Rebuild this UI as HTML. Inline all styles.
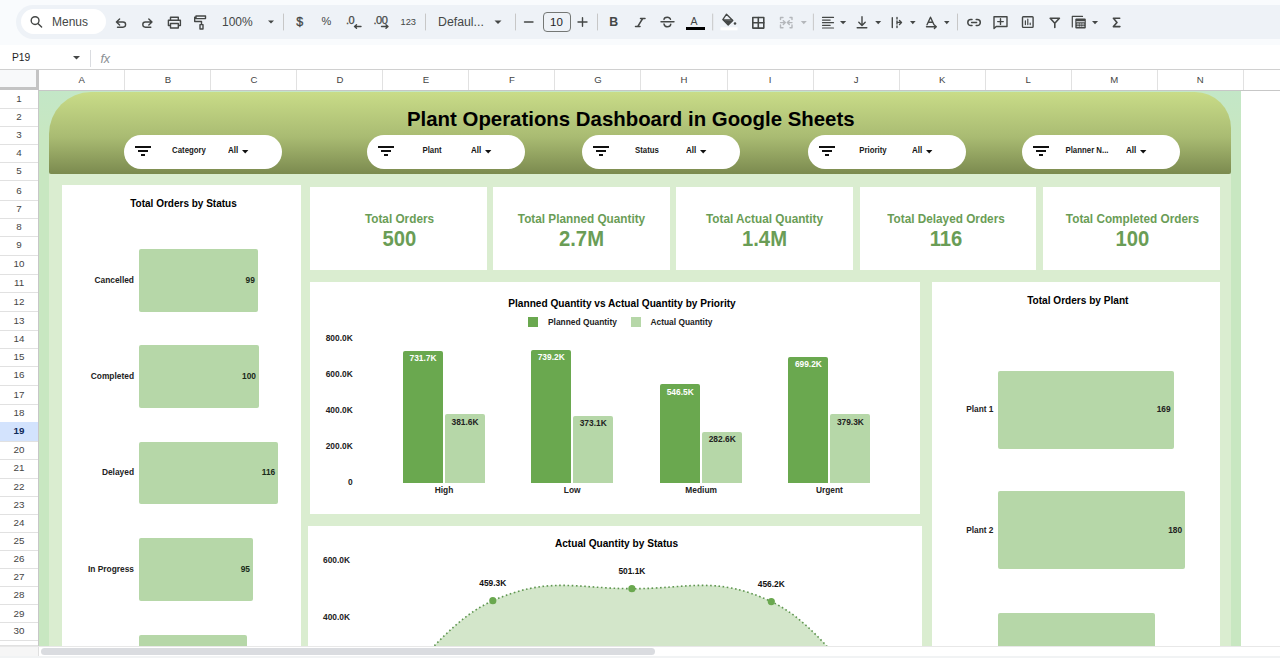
<!DOCTYPE html><html><head><meta charset="utf-8"><style>
*{margin:0;padding:0;box-sizing:border-box}
html,body{width:1280px;height:658px;overflow:hidden;background:#fff;font-family:"Liberation Sans",sans-serif;position:relative}
.a{position:absolute}
.tt{position:absolute;color:#444746;white-space:nowrap;line-height:1}
.dv{position:absolute;width:1px;height:20px;background:#c7c7c7;top:12px}
.ch{position:absolute;top:70px;height:20px;border-right:1px solid #e1e1e1;font-size:9.6px;color:#444;text-align:center;line-height:19.6px}
.rh{position:absolute;left:0;width:38px;border-bottom:1px solid #e1e1e1;font-size:9.8px;color:#444;text-align:center}
.lbl{position:absolute;font-weight:bold;color:#222;white-space:nowrap;line-height:1}
svg{position:absolute;overflow:visible}
</style></head><body>
<div class="a" style="left:0;top:0;width:1280px;height:45px;background:#f9fbfd"></div>
<div class="a" style="left:16px;top:5px;width:1280px;height:33.5px;background:#eef2f7;border-radius:17px"></div>
<div class="a" style="left:21px;top:9px;width:85px;height:25px;background:#fff;border-radius:13px"></div>
<div class="tt" style="left:52px;top:15.5px;font-size:12px">Menus</div>
<div class="tt" style="left:222px;top:16px;font-size:12px">100%</div>
<div class="tt" style="left:296.3px;top:15.5px;font-size:12.5px;-webkit-text-stroke:0.3px #444746">$</div>
<div class="tt" style="left:321.5px;top:16.3px;font-size:11px">%</div>
<div class="tt" style="left:346px;top:15.3px;font-size:11px;-webkit-text-stroke:0.25px #444746;letter-spacing:-0.5px">.0</div>
<div class="tt" style="left:373.5px;top:15.3px;font-size:11px;-webkit-text-stroke:0.25px #444746;letter-spacing:-0.5px">.00</div>
<div class="tt" style="left:400.5px;top:17.5px;font-size:9.3px">123</div>
<div class="tt" style="left:438px;top:15.5px;font-size:12.3px">Defaul...</div>
<div class="a" style="left:542.5px;top:12px;width:28px;height:20px;border:1px solid #747775;border-radius:4px"></div>
<div class="tt" style="left:542.5px;width:28px;text-align:center;top:16.5px;font-size:11.5px;color:#1f1f1f">10</div>
<div class="tt" style="left:609.3px;top:16.2px;font-size:12.3px;font-weight:bold">B</div>
<div class="tt" style="left:690.5px;top:16px;font-size:10.5px">A</div>
<svg style="left:0;top:0" width="1280" height="45" fill="none" stroke="#444746" stroke-width="1.4" stroke-linecap="round" stroke-linejoin="round"><circle cx="35.1" cy="20.6" r="3.9"/><path d="M37.9 23.4L41.6 27.1"/><path d="M116.4 22H123A2.6 2.6 0 0 1 123 27.2H117.5M119.6 18.9L116.4 22L119.6 25.1"/><path d="M152 22H145.4A2.6 2.6 0 0 0 145.4 27.2H150.8M148.8 18.9L152 22L148.8 25.1"/><path d="M170.5 19.6V17.2H178.3V19.6M170.5 25.5H168.4V20.2H180.4V25.5H178.3M170.5 23.5H178.3V28H170.5Z"/><path d="M196 16H205.5V18.6H196ZM196 17.3H194.7V21.5H201.5V24.6M200 24.6H203V29H200Z"/><path d="M268 20.5L271 23.5L274 20.5Z" fill="#444746" stroke="none"/><path d="M283.5 14V30M425.5 14V30M515.5 14V30M597.5 14V30M712.7 14V30M813.4 14V30M957.5 14V30" stroke="#c7c7c7" stroke-width="1"/><path d="M494.5 20.5L498 24L501.5 20.5Z" fill="#444746" stroke="none"/><path d="M354.5 26.5H361M354.5 26.5L356.5 24.7M354.5 26.5L356.5 28.3"/><path d="M381.5 26.5H388M388 26.5L386 24.7M388 26.5L386 28.3"/><path d="M524.5 22H533M578 22H587M582.5 17.7V26.3"/><path d="M640.5 18.5H645M635.5 26.4H640M642.7 18.5L637.8 26.4" stroke-width="1.5"/><path d="M661 21.8H674M670.5 19.4C670 17.6 668.5 17.2 667.3 17.2C665.3 17.2 664 18.3 664 19.6M664 24C664.4 26 666 26.8 667.4 26.8C669.3 26.8 670.6 25.8 670.8 24.2"/><rect x="686" y="27" width="19" height="3" fill="#000" stroke="none"/><path d="M726.5 14.2L732.8 20.5L728.2 25L722.8 19.6Z M723 19.8H732.5" stroke-width="1.3"/><path d="M723.3 20L728.2 24.8L732.5 20.5Z" fill="#444746" stroke="none"/><circle cx="735" cy="23.5" r="1.3" fill="#444746" stroke="none"/><rect x="720.5" y="27.3" width="17" height="3" fill="#fff" stroke="none"/><rect x="752.8" y="17.5" width="11" height="10.6" stroke-width="1.6"/><path d="M758.3 17.5V28.1M752.8 22.8H763.8" stroke-width="1.6"/><path d="M780.5 19.5V17.5H783M790 17.5H792V19.5M780.5 25V27.8H783M790 27.8H792V25M780.5 22.6H785M783.3 20.7L785.3 22.6L783.3 24.5M792 22.6H787.5M789.3 20.7L787.3 22.6L789.3 24.5" stroke="#b4b7bb"/><path d="M800.8 21L803.8 24.2L806.8 21Z" fill="#b4b7bb" stroke="none"/><path d="M822.5 17.4H833.5M822.5 20.1H830.2M822.5 22.7H833.5M822.5 25.3H830.2M822.5 28H833.5" stroke-width="1.2"/><path d="M840 21L843.1 24.2L846.2 21Z" fill="#444746" stroke="none"/><path d="M862 16.8V25.2M858.8 22.3L862 25.5L865.2 22.3M857.2 27.7H866.8"/><path d="M875.2 21L878.2 24.2L881.2 21Z" fill="#444746" stroke="none"/><path d="M892.3 17.7V27.5M897 17.5V19M897 21V24M897 26V27.5M897.5 22.4H901.5M899.5 20.4L901.5 22.4L899.5 24.4"/><path d="M910 21L912.8 24.2L915.6 21Z" fill="#444746" stroke="none"/><path d="M927 24.8L930.5 17.2L934 24.8M928.2 22.2H932.8M926.5 26.8H936.3M934.4 25.1L936.3 26.8L934.4 28.5"/><path d="M944 21L946.8 24.2L949.5 21Z" fill="#444746" stroke="none"/><path d="M972 19.6H970.8A3 3 0 0 0 970.8 25.6H972M976.2 19.6H977.3A3 3 0 0 1 977.3 25.6H976.2M971.6 22.6H976.6" stroke-width="1.5"/><path d="M994 16.8H1007V26.5H996.2L994 28.6Z M1000.5 18.8V24.4M997.7 21.6H1003.3" stroke-width="1.4"/><rect x="1022.5" y="16.8" width="10.6" height="10.6" rx="0.8" stroke-width="1.4"/><path d="M1025.4 20.8V24.6M1027.8 19V24.6M1030.2 23V24.6" stroke-width="1.2"/><path d="M1050.2 18.3H1059.4L1054.8 23.2ZM1054.8 23V27.4" stroke-width="1.6"/><path d="M1072.3 27V16.4H1082.5" stroke-width="1.2"/><rect x="1075.3" y="18.6" width="10.5" height="10" rx="1" fill="#444746" stroke="none"/><path d="M1076.8 21.8H1084.3M1077.2 24H1078.6M1080 24H1081.2M1082.5 24H1083.9M1077.2 26.2H1078.6M1080 26.2H1081.2M1082.5 26.2H1083.9" stroke="#eef2f7" stroke-width="1.1"/><path d="M1092 21L1095 24.2L1098.1 21Z" fill="#444746" stroke="none"/><path d="M1119.7 18.2H1113.4L1117 22.4L1113.4 26.6H1119.9" stroke-width="1.6"/></svg>
<div class="a" style="left:0;top:45px;width:1280px;height:25px;background:#fff;border-bottom:1px solid #d0d0d0"></div>
<div class="tt" style="left:12px;top:52.5px;font-size:10.3px;color:#1f1f1f">P19</div>
<svg style="left:73px;top:56px" width="7" height="4"><path d="M0 0H7L3.5 3.6Z" fill="#444746"/></svg>
<div class="a" style="left:90px;top:50px;width:1px;height:17px;background:#dadce0"></div>
<div class="tt" style="left:100.5px;top:52.5px;font-size:12.5px;font-style:italic;color:#8a8f94;letter-spacing:-0.3px">fx</div>
<div class="a" style="left:0;top:70px;width:1280px;height:21px;background:#fff;border-bottom:1px solid #c7c7c7"></div>
<div class="ch" style="left:39.30px;width:86.03px">A</div>
<div class="ch" style="left:125.33px;width:86.03px">B</div>
<div class="ch" style="left:211.36px;width:86.03px">C</div>
<div class="ch" style="left:297.39px;width:86.03px">D</div>
<div class="ch" style="left:383.42px;width:86.03px">E</div>
<div class="ch" style="left:469.45px;width:86.03px">F</div>
<div class="ch" style="left:555.48px;width:86.03px">G</div>
<div class="ch" style="left:641.51px;width:86.03px">H</div>
<div class="ch" style="left:727.54px;width:86.03px">I</div>
<div class="ch" style="left:813.57px;width:86.03px">J</div>
<div class="ch" style="left:899.60px;width:86.03px">K</div>
<div class="ch" style="left:985.63px;width:86.03px">L</div>
<div class="ch" style="left:1071.66px;width:86.03px">M</div>
<div class="ch" style="left:1157.69px;width:86.03px">N</div>
<div class="a" style="left:0;top:70px;width:39px;height:21px;background:#f8f9fa;border-right:3px solid #c4c4c4;border-bottom:4px solid #c4c4c4"></div>
<div class="a" style="left:0;top:90px;width:39px;height:556px;background:#fff;border-right:1px solid #c7c7c7"></div>
<div class="rh" style="top:90.0px;height:18.8px;line-height:18.2px;">1</div>
<div class="rh" style="top:108.2px;height:18.6px;line-height:18.0px;">2</div>
<div class="rh" style="top:126.2px;height:18.7px;line-height:18.1px;">3</div>
<div class="rh" style="top:144.3px;height:18.6px;line-height:18.0px;">4</div>
<div class="rh" style="top:162.3px;height:19.2px;line-height:18.6px;">5</div>
<div class="rh" style="top:180.9px;height:20.1px;line-height:19.5px;">6</div>
<div class="rh" style="top:200.4px;height:18.6px;line-height:18.0px;">7</div>
<div class="rh" style="top:218.4px;height:18.6px;line-height:18.0px;">8</div>
<div class="rh" style="top:236.4px;height:19.4px;line-height:18.8px;">9</div>
<div class="rh" style="top:255.2px;height:19.5px;line-height:18.9px;">10</div>
<div class="rh" style="top:274.1px;height:19.0px;line-height:18.4px;">11</div>
<div class="rh" style="top:292.5px;height:19.4px;line-height:18.8px;">12</div>
<div class="rh" style="top:311.3px;height:19.6px;line-height:19.0px;">13</div>
<div class="rh" style="top:330.3px;height:18.4px;line-height:17.8px;">14</div>
<div class="rh" style="top:348.1px;height:18.9px;line-height:18.3px;">15</div>
<div class="rh" style="top:366.4px;height:19.3px;line-height:18.7px;">16</div>
<div class="rh" style="top:385.1px;height:19.7px;line-height:19.1px;">17</div>
<div class="rh" style="top:404.2px;height:18.6px;line-height:18.0px;">18</div>
<div class="rh" style="top:422.2px;height:19.4px;line-height:18.8px;background:#d3e3fd;font-weight:bold;color:#0e2a5a;">19</div>
<div class="rh" style="top:441.0px;height:18.9px;line-height:18.3px;">20</div>
<div class="rh" style="top:459.3px;height:19.3px;line-height:18.7px;">21</div>
<div class="rh" style="top:478.0px;height:18.7px;line-height:18.1px;">22</div>
<div class="rh" style="top:496.1px;height:18.9px;line-height:18.3px;">23</div>
<div class="rh" style="top:514.4px;height:18.6px;line-height:18.0px;">24</div>
<div class="rh" style="top:532.4px;height:18.5px;line-height:17.9px;">25</div>
<div class="rh" style="top:550.3px;height:18.6px;line-height:18.0px;">26</div>
<div class="rh" style="top:568.3px;height:18.6px;line-height:18.0px;">27</div>
<div class="rh" style="top:586.3px;height:19.0px;line-height:18.4px;">28</div>
<div class="rh" style="top:604.7px;height:18.3px;line-height:17.7px;">29</div>
<div class="rh" style="top:622.4px;height:19.1px;line-height:18.5px;">30</div>
<div class="a" style="left:0;top:641px;width:38px;height:5px;background:#fff;border-bottom:1px solid #e1e1e1"></div>
<div class="a" style="left:39px;top:91px;width:1202px;height:555px;background:#c8e7c1"></div>
<div class="a" style="left:39px;top:91px;width:1202px;height:45px;background:linear-gradient(#c3e7c7,#c8e7c1)"></div>
<div class="a" style="left:49px;top:174px;width:1182px;height:472px;background:#daedd0"></div>
<div class="a" style="left:49px;top:92px;width:1182px;height:82px;border-radius:42px 36px 2px 2px;background:linear-gradient(#c9dc88,#a9bb72 55%,#7b8a4f)"></div>
<div class="lbl" style="left:407px;top:109.3px;font-size:20.4px;color:#000">Plant Operations Dashboard in Google Sheets</div>
<div class="a" style="left:124px;top:135px;width:158px;height:34px;border-radius:17px;background:#fff"></div>
<div class="lbl" style="left:124px;width:130px;text-align:center;top:146.3px;font-size:8.8px;color:#1a1a1a;transform:scaleX(0.89)">Category</div>
<div class="lbl" style="left:227.8px;top:146.2px;font-size:9.3px;color:#111;transform:scaleX(0.86);transform-origin:0 0">All</div>
<svg style="left:241.8px;top:150.2px" width="7" height="4"><path d="M0 0H6.4L3.2 3.6Z" fill="#111"/></svg>
<div class="a" style="left:135px;top:146px;width:16px;height:2px;background:#111"></div>
<div class="a" style="left:138px;top:150px;width:10px;height:2px;background:#111"></div>
<div class="a" style="left:141px;top:154px;width:4px;height:2px;background:#111"></div>
<div class="a" style="left:367px;top:135px;width:158px;height:34px;border-radius:17px;background:#fff"></div>
<div class="lbl" style="left:367px;width:130px;text-align:center;top:146.3px;font-size:8.8px;color:#1a1a1a;transform:scaleX(0.89)">Plant</div>
<div class="lbl" style="left:470.8px;top:146.2px;font-size:9.3px;color:#111;transform:scaleX(0.86);transform-origin:0 0">All</div>
<svg style="left:484.8px;top:150.2px" width="7" height="4"><path d="M0 0H6.4L3.2 3.6Z" fill="#111"/></svg>
<div class="a" style="left:378px;top:146px;width:16px;height:2px;background:#111"></div>
<div class="a" style="left:381px;top:150px;width:10px;height:2px;background:#111"></div>
<div class="a" style="left:384px;top:154px;width:4px;height:2px;background:#111"></div>
<div class="a" style="left:582px;top:135px;width:158px;height:34px;border-radius:17px;background:#fff"></div>
<div class="lbl" style="left:582px;width:130px;text-align:center;top:146.3px;font-size:8.8px;color:#1a1a1a;transform:scaleX(0.89)">Status</div>
<div class="lbl" style="left:685.8px;top:146.2px;font-size:9.3px;color:#111;transform:scaleX(0.86);transform-origin:0 0">All</div>
<svg style="left:699.8px;top:150.2px" width="7" height="4"><path d="M0 0H6.4L3.2 3.6Z" fill="#111"/></svg>
<div class="a" style="left:593px;top:146px;width:16px;height:2px;background:#111"></div>
<div class="a" style="left:596px;top:150px;width:10px;height:2px;background:#111"></div>
<div class="a" style="left:599px;top:154px;width:4px;height:2px;background:#111"></div>
<div class="a" style="left:808px;top:135px;width:158px;height:34px;border-radius:17px;background:#fff"></div>
<div class="lbl" style="left:808px;width:130px;text-align:center;top:146.3px;font-size:8.8px;color:#1a1a1a;transform:scaleX(0.89)">Priority</div>
<div class="lbl" style="left:911.8px;top:146.2px;font-size:9.3px;color:#111;transform:scaleX(0.86);transform-origin:0 0">All</div>
<svg style="left:925.8px;top:150.2px" width="7" height="4"><path d="M0 0H6.4L3.2 3.6Z" fill="#111"/></svg>
<div class="a" style="left:819px;top:146px;width:16px;height:2px;background:#111"></div>
<div class="a" style="left:822px;top:150px;width:10px;height:2px;background:#111"></div>
<div class="a" style="left:825px;top:154px;width:4px;height:2px;background:#111"></div>
<div class="a" style="left:1022px;top:135px;width:158px;height:34px;border-radius:17px;background:#fff"></div>
<div class="lbl" style="left:1022px;width:130px;text-align:center;top:146.3px;font-size:8.8px;color:#1a1a1a;transform:scaleX(0.89)">Planner N...</div>
<div class="lbl" style="left:1125.8px;top:146.2px;font-size:9.3px;color:#111;transform:scaleX(0.86);transform-origin:0 0">All</div>
<svg style="left:1139.8px;top:150.2px" width="7" height="4"><path d="M0 0H6.4L3.2 3.6Z" fill="#111"/></svg>
<div class="a" style="left:1033px;top:146px;width:16px;height:2px;background:#111"></div>
<div class="a" style="left:1036px;top:150px;width:10px;height:2px;background:#111"></div>
<div class="a" style="left:1039px;top:154px;width:4px;height:2px;background:#111"></div>
<div class="a" style="left:62px;top:185px;width:239px;height:461px;background:#fff"></div>
<div class="a" style="left:310px;top:187px;width:177px;height:83px;background:#fff"></div>
<div class="lbl" style="left:311.2px;width:177px;text-align:center;top:213px;font-size:12.8px;color:#6a9d56;transform:scaleX(0.92)">Total Orders</div>
<div class="lbl" style="left:311.2px;width:177px;text-align:center;top:227.8px;font-size:21.2px;color:#6a9d56;transform:scaleX(0.955)">500</div>
<div class="a" style="left:493px;top:187px;width:177px;height:83px;background:#fff"></div>
<div class="lbl" style="left:493px;width:177px;text-align:center;top:213px;font-size:12.8px;color:#6a9d56;transform:scaleX(0.92)">Total Planned Quantity</div>
<div class="lbl" style="left:493px;width:177px;text-align:center;top:227.8px;font-size:21.2px;color:#6a9d56;transform:scaleX(0.955)">2.7M</div>
<div class="a" style="left:676px;top:187px;width:177px;height:83px;background:#fff"></div>
<div class="lbl" style="left:676px;width:177px;text-align:center;top:213px;font-size:12.8px;color:#6a9d56;transform:scaleX(0.92)">Total Actual Quantity</div>
<div class="lbl" style="left:676px;width:177px;text-align:center;top:227.8px;font-size:21.2px;color:#6a9d56;transform:scaleX(0.955)">1.4M</div>
<div class="a" style="left:860px;top:187px;width:176px;height:83px;background:#fff"></div>
<div class="lbl" style="left:858.2px;width:176px;text-align:center;top:213px;font-size:12.8px;color:#6a9d56;transform:scaleX(0.92)">Total Delayed Orders</div>
<div class="lbl" style="left:858.2px;width:176px;text-align:center;top:227.8px;font-size:21.2px;color:#6a9d56;transform:scaleX(0.955)">116</div>
<div class="a" style="left:1043px;top:187px;width:177px;height:83px;background:#fff"></div>
<div class="lbl" style="left:1044.1px;width:177px;text-align:center;top:213px;font-size:12.8px;color:#6a9d56;transform:scaleX(0.92)">Total Completed Orders</div>
<div class="lbl" style="left:1044.1px;width:177px;text-align:center;top:227.8px;font-size:21.2px;color:#6a9d56;transform:scaleX(0.955)">100</div>
<div class="a" style="left:310px;top:282px;width:610px;height:232px;background:#fff"></div>
<div class="a" style="left:308px;top:526px;width:614px;height:120px;background:#fff"></div>
<div class="a" style="left:932px;top:282px;width:288px;height:364px;background:#fff"></div>
<div class="lbl" style="left:64px;width:239px;text-align:center;top:199.3px;font-size:10px;color:#000">Total Orders by Status</div>
<div class="a" style="left:139px;top:249px;width:119.0px;height:62.6px;background:#b6d7a8;border-radius:2px"></div>
<div class="lbl" style="right:1146px;top:275.6px;font-size:8.4px;color:#222">Cancelled</div>
<div class="lbl" style="right:1025.2px;top:275.6px;font-size:8.4px;color:#1a2a1a">99</div>
<div class="a" style="left:139px;top:345.3px;width:120.2px;height:62.6px;background:#b6d7a8;border-radius:2px"></div>
<div class="lbl" style="right:1146px;top:371.90000000000003px;font-size:8.4px;color:#222">Completed</div>
<div class="lbl" style="right:1024.0px;top:371.90000000000003px;font-size:8.4px;color:#1a2a1a">100</div>
<div class="a" style="left:139px;top:441.8px;width:139.4px;height:62.6px;background:#b6d7a8;border-radius:2px"></div>
<div class="lbl" style="right:1146px;top:468.40000000000003px;font-size:8.4px;color:#222">Delayed</div>
<div class="lbl" style="right:1004.8px;top:468.40000000000003px;font-size:8.4px;color:#1a2a1a">116</div>
<div class="a" style="left:139px;top:538.2px;width:114.2px;height:62.6px;background:#b6d7a8;border-radius:2px"></div>
<div class="lbl" style="right:1146px;top:564.8000000000001px;font-size:8.4px;color:#222">In Progress</div>
<div class="lbl" style="right:1030.0px;top:564.8000000000001px;font-size:8.4px;color:#1a2a1a">95</div>
<div class="a" style="left:139px;top:635.2px;width:107.7px;height:62.6px;background:#b6d7a8;border-radius:2px"></div>
<div class="lbl" style="right:1146px;top:661.8000000000001px;font-size:8.4px;color:#222">On Hold</div>
<div class="lbl" style="right:1036.5px;top:661.8000000000001px;font-size:8.4px;color:#1a2a1a">89.6</div>
<div class="lbl" style="left:310px;width:624px;text-align:center;top:299.2px;font-size:10.15px;color:#000">Planned Quantity vs Actual Quantity by Priority</div>
<div class="a" style="left:528px;top:317px;width:10px;height:9.8px;background:#6aa84f"></div>
<div class="lbl" style="left:548px;top:318px;font-size:8.4px;color:#222">Planned Quantity</div>
<div class="a" style="left:631px;top:317px;width:10px;height:9.8px;background:#b6d7a8"></div>
<div class="lbl" style="left:650.5px;top:318px;font-size:8.4px;color:#222">Actual Quantity</div>
<div class="lbl" style="right:927.3px;top:333.8px;font-size:8.4px;color:#222">800.0K</div>
<div class="lbl" style="right:927.3px;top:369.9px;font-size:8.4px;color:#222">600.0K</div>
<div class="lbl" style="right:927.3px;top:405.9px;font-size:8.4px;color:#222">400.0K</div>
<div class="lbl" style="right:927.3px;top:441.9px;font-size:8.4px;color:#222">200.0K</div>
<div class="lbl" style="right:927.3px;top:478.0px;font-size:8.4px;color:#222">0</div>
<div class="a" style="left:403.0px;top:350.8px;width:40px;height:132.1px;background:#6aa84f;border-radius:2px 2px 0 0"></div>
<div class="a" style="left:445.0px;top:414.0px;width:40px;height:68.9px;background:#b6d7a8;border-radius:2px 2px 0 0"></div>
<div class="lbl" style="left:403.0px;width:40px;text-align:center;top:354.1px;font-size:8.4px;color:#fff">731.7K</div>
<div class="lbl" style="left:445.0px;width:40px;text-align:center;top:417.5px;font-size:8.4px;color:#222">381.6K</div>
<div class="lbl" style="left:383.0px;width:122px;text-align:center;top:486.3px;font-size:8.4px;color:#222">High</div>
<div class="a" style="left:531.2px;top:349.5px;width:40px;height:133.4px;background:#6aa84f;border-radius:2px 2px 0 0"></div>
<div class="a" style="left:573.2px;top:415.6px;width:40px;height:67.3px;background:#b6d7a8;border-radius:2px 2px 0 0"></div>
<div class="lbl" style="left:531.2px;width:40px;text-align:center;top:352.8px;font-size:8.4px;color:#fff">739.2K</div>
<div class="lbl" style="left:573.2px;width:40px;text-align:center;top:419.1px;font-size:8.4px;color:#222">373.1K</div>
<div class="lbl" style="left:511.20000000000005px;width:122px;text-align:center;top:486.3px;font-size:8.4px;color:#222">Low</div>
<div class="a" style="left:660.2px;top:384.3px;width:40px;height:98.6px;background:#6aa84f;border-radius:2px 2px 0 0"></div>
<div class="a" style="left:702.2px;top:431.9px;width:40px;height:51.0px;background:#b6d7a8;border-radius:2px 2px 0 0"></div>
<div class="lbl" style="left:660.2px;width:40px;text-align:center;top:387.6px;font-size:8.4px;color:#fff">546.5K</div>
<div class="lbl" style="left:702.2px;width:40px;text-align:center;top:435.4px;font-size:8.4px;color:#222">282.6K</div>
<div class="lbl" style="left:640.2px;width:122px;text-align:center;top:486.3px;font-size:8.4px;color:#222">Medium</div>
<div class="a" style="left:788.4px;top:356.7px;width:40px;height:126.2px;background:#6aa84f;border-radius:2px 2px 0 0"></div>
<div class="a" style="left:830.4px;top:414.4px;width:40px;height:68.5px;background:#b6d7a8;border-radius:2px 2px 0 0"></div>
<div class="lbl" style="left:788.4px;width:40px;text-align:center;top:360.0px;font-size:8.4px;color:#fff">699.2K</div>
<div class="lbl" style="left:830.4px;width:40px;text-align:center;top:417.9px;font-size:8.4px;color:#222">379.3K</div>
<div class="lbl" style="left:768.4px;width:122px;text-align:center;top:486.3px;font-size:8.4px;color:#222">Urgent</div>
<div class="lbl" style="left:309.5px;width:614px;text-align:center;top:538.7px;font-size:10.15px;color:#000">Actual Quantity by Status</div>
<div class="lbl" style="right:930px;top:555.5px;font-size:8.4px;color:#222">600.0K</div>
<div class="lbl" style="right:930px;top:613px;font-size:8.4px;color:#222">400.0K</div>
<svg style="left:0;top:0" width="1280" height="658"><defs><clipPath id="ac"><rect x="308" y="526" width="614" height="120"/></clipPath></defs><g clip-path="url(#ac)"><path d="M354.0,712.0 C409.6,689.7 437.2,625.4 492.8,600.7 C548.4,576.0 576.2,588.5 631.9,588.7 C687.6,588.9 715.6,575.3 771.3,601.6 C827.0,627.9 854.8,696.3 910.5,720.0 L910.5,740 L354,740 Z" fill="#d3e6ca"/><path d="M354.0,712.0 C409.6,689.7 437.2,625.4 492.8,600.7 C548.4,576.0 576.2,588.5 631.9,588.7 C687.6,588.9 715.6,575.3 771.3,601.6 C827.0,627.9 854.8,696.3 910.5,720.0" fill="none" stroke="#5f9650" stroke-width="1.6" stroke-dasharray="1.6 2.6" stroke-linecap="butt"/><circle cx="492.8" cy="600.7" r="3.6" fill="#6aa84f"/><circle cx="631.9" cy="588.7" r="3.6" fill="#6aa84f"/><circle cx="771.3" cy="601.6" r="3.6" fill="#6aa84f"/></g></svg>
<div class="lbl" style="left:462.8px;width:60px;text-align:center;top:578.5px;font-size:8.4px;color:#111">459.3K</div>
<div class="lbl" style="left:601.9px;width:60px;text-align:center;top:566.5px;font-size:8.4px;color:#111">501.1K</div>
<div class="lbl" style="left:741.3px;width:60px;text-align:center;top:579.5px;font-size:8.4px;color:#111">456.2K</div>
<div class="lbl" style="left:933.8px;width:288px;text-align:center;top:295.5px;font-size:10.1px;color:#000">Total Orders by Plant</div>
<div class="a" style="left:998.2px;top:370.6px;width:175.8px;height:78.2px;background:#b6d7a8;border-radius:2px"></div>
<div class="lbl" style="right:286.5px;top:404.8px;font-size:8.3px;color:#222">Plant 1</div>
<div class="lbl" style="right:109.5px;top:404.8px;font-size:8.3px;color:#222">169</div>
<div class="a" style="left:998.2px;top:491.3px;width:187.3px;height:78.2px;background:#b6d7a8;border-radius:2px"></div>
<div class="lbl" style="right:286.5px;top:525.5px;font-size:8.3px;color:#222">Plant 2</div>
<div class="lbl" style="right:98.0px;top:525.5px;font-size:8.3px;color:#222">180</div>
<div class="a" style="left:998.2px;top:612.9px;width:157.1px;height:78.2px;background:#b6d7a8;border-radius:2px"></div>
<div class="lbl" style="right:286.5px;top:647.1px;font-size:8.3px;color:#222">Plant 3</div>
<div class="lbl" style="right:128.2px;top:647.1px;font-size:8.3px;color:#222">151</div>
<!--END-->
<div class="a" style="left:0;top:646px;width:1280px;height:12px;background:#fff;border-top:1px solid #e8e8e8"></div>
<div class="a" style="left:41px;top:648px;width:614px;height:7px;background:#dadce0;border-radius:4px"></div>
<div class="a" style="left:0;top:656px;width:1280px;height:2px;background:#f1f3f4"></div>
<div class="a" style="left:0;top:646.5px;width:39px;height:9.5px;background:#f6f6f6;border-right:1px solid #e0e0e0"></div>
</body></html>
